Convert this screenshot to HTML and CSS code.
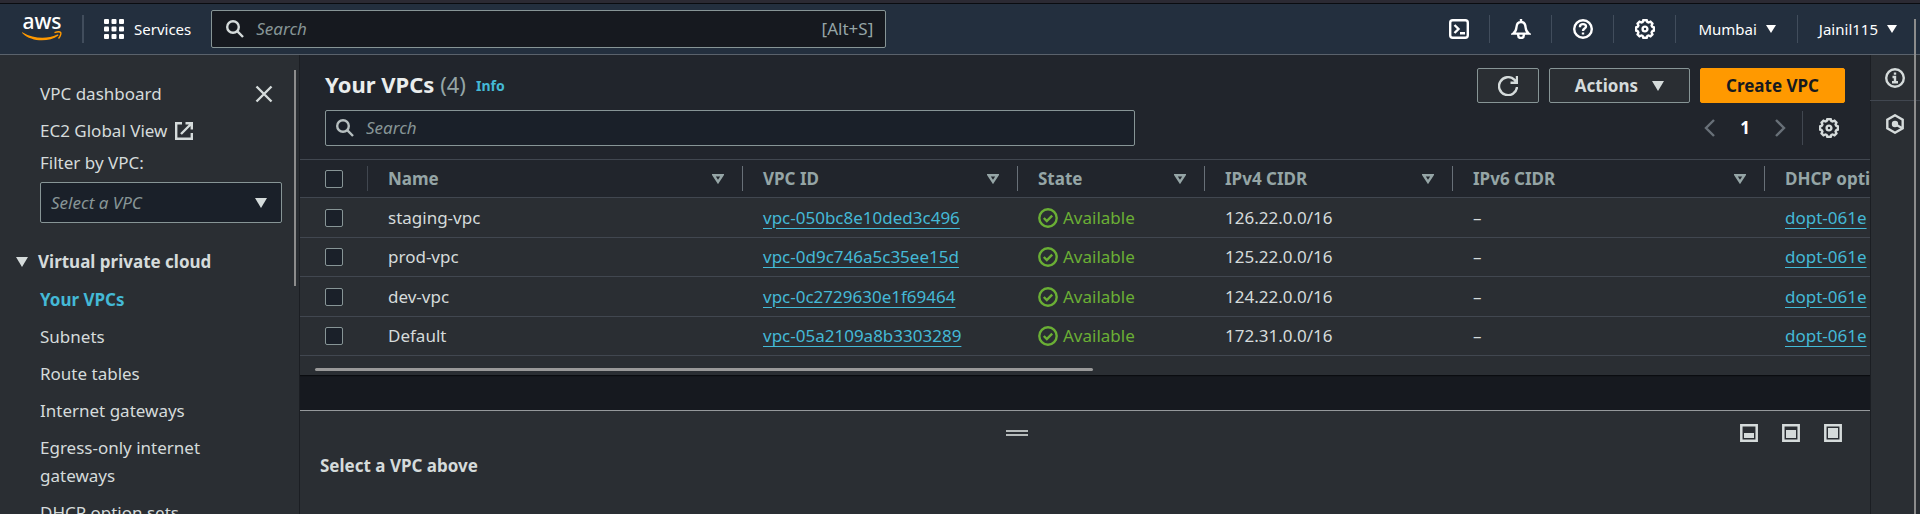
FILE: index.html
```html
<!DOCTYPE html>
<html lang="en">
<head>
<meta charset="utf-8">
<title>Your VPCs | VPC Console</title>
<link rel="stylesheet" href="styles.css">
</head>
<body>
<svg class="sprite" aria-hidden="true">
  <symbol id="search" viewBox="0 0 18 18"><circle cx="7" cy="7" r="5.8"/><path d="M11.2 11.2 17 17"/></symbol>
  <symbol id="gear" viewBox="0 0 20 20"><path d="M8.300 1.200h3.400l.7 1.800 1.200.5 1.900-.8 1.900 1.900-.8 1.900.5 1.200 1.700.7v3.200l-1.700.7-.5 1.200.8 1.900-1.900 1.900-1.900-.8-1.200.5-.7 1.800H8.300l-.7-1.800-1.200-.5-1.900.8-1.900-1.900.8-1.900-.5-1.200-1.700-.7V8.400l1.700-.7.500-1.200-.8-1.900 1.900-1.900 1.900.8L7.600 3z"/><circle cx="10" cy="10" r="2.400"/></symbol>
  <symbol id="sort" viewBox="0 0 12 10"><path d="M1.500 1.200h9L6 8z"/></symbol>
  <symbol id="check" viewBox="0 0 20 20"><circle cx="10" cy="10" r="8.700"/><path d="m5.800 10 3 3 5.400-5.400"/></symbol>
</svg>

<header class="topbar">
  <a class="logo" href="#" aria-label="AWS home"><span>aws</span>
    <svg viewBox="0 0 40 10"><path fill="#ff9900" d="M.8 1.400C12 8 25 8.400 35.300 3.500c1-.4 1.700.5.8 1.200C27 11.200 9.500 11.200.4 2.200c-.6-.6-.2-1.100.4-.8z"/><path fill="none" stroke="#ff9900" stroke-width="1.400" d="M32.500 1.700c3-1.100 5.500-.9 6.200-.2.500.9-.2 3.800-2.200 6"/></svg>
  </a>
  <span class="rule"></span>
  <button class="services"><svg class="i20" viewBox="0 0 20 20" fill="#fff"><g id="d"><rect width="5" height="5" rx="1"/><rect x="7.500" width="5" height="5" rx="1"/><rect x="15" width="5" height="5" rx="1"/></g><use href="#d" y="7.500"/><use href="#d" y="15"/></svg>Services</button>
  <label class="global-search"><svg class="line i18"><use href="#search"/></svg><input type="text" placeholder="Search" aria-label="Search services"><span>[Alt+S]</span></label>
  <nav class="tools">
    <button aria-label="CloudShell"><svg class="line i20" viewBox="0 0 20 20"><rect x="1.200" y="1.200" width="17.600" height="17.600" rx="2.500"/><path d="m5.500 6 4 4-4 4M11 14.200h5"/></svg></button>
    <button aria-label="Notifications"><svg class="line i20" viewBox="0 0 20 20"><path d="M10 0v3M2.200 14.600h15.600C15.500 12.800 14.800 11 14.600 8.500 14.400 5 12.600 3 10 3S5.600 5 5.400 8.500c-.2 2.500-.9 4.300-3.200 6.100zM7.200 15v1.200a2.800 2.800 0 0 0 5.600 0V15"/></svg></button>
    <button aria-label="Help"><svg class="line i20" viewBox="0 0 20 20"><circle cx="10" cy="10" r="8.800"/><path d="M7 8.300V7.500C7 6 8.300 5.100 10 5.100s3 .9 3 2.400c0 2.200-3 2-3 4.500M10 13.500v2"/></svg></button>
    <button aria-label="Settings"><svg class="line i20"><use href="#gear"/></svg></button>
    <button class="region">Mumbai <i class="caret"></i></button>
    <button class="account">Jainil115 <i class="caret"></i></button>
  </nav>
</header>

<div class="layout">
  <aside class="sidebar">
    <div class="side-top"><a href="#">VPC dashboard</a><button aria-label="Close"><svg class="line i18" viewBox="0 0 18 18"><path d="m1.500 1.500 15 15m0-15-15 15"/></svg></button></div>
    <a class="global" href="#">EC2 Global View <svg class="line i18" viewBox="0 0 18 18"><path d="M7 1.200H1.200v15.600h15.600V11M10.500 1.200h6.300v6.300M16.500 1.500 6 12"/></svg></a>
    <label class="filter-label" for="filter">Filter by VPC:</label>
    <div class="select"><select id="filter"><option>Select a VPC</option></select><i class="caret big"></i></div>
    <h2><i class="caret big"></i>Virtual private cloud</h2>
    <ul>
      <li><a class="current" href="#">Your VPCs</a></li>
      <li><a href="#">Subnets</a></li>
      <li><a href="#">Route tables</a></li>
      <li><a href="#">Internet gateways</a></li>
      <li><a href="#">Egress-only internet gateways</a></li>
      <li><a href="#">DHCP option sets</a></li>
    </ul>
    <div class="side-scroll"></div>
  </aside>

  <main>
    <section class="list">
      <div class="list-head">
        <div class="title-row">
          <h1>Your VPCs <span>(4)</span></h1><a class="info" href="#">Info</a>
          <div class="actions">
            <button class="btn refresh" aria-label="Refresh"><svg class="line i20" viewBox="0 0 20 20"><path d="M19 11a9 9 0 1 1-2.700-7.300L18.500 6M19 0v6.800h-6.500"/></svg></button>
            <button class="btn">Actions <i class="caret big"></i></button>
            <button class="btn primary">Create VPC</button>
          </div>
        </div>
        <div class="find-row">
          <label class="find"><svg class="line i18"><use href="#search"/></svg><input type="text" placeholder="Search" aria-label="Search VPCs"></label>
          <div class="pager">
            <button aria-label="Previous page"><svg class="line chev" viewBox="0 0 11 18"><path d="M10 1 2 9l8 8"/></svg></button>
            <b>1</b>
            <button aria-label="Next page"><svg class="line chev" viewBox="0 0 11 18"><path d="m1 1 8 8-8 8"/></svg></button>
            <button class="prefs" aria-label="Preferences"><svg class="line i20"><use href="#gear"/></svg></button>
          </div>
        </div>
      </div>
      <div class="table-wrap">
        <table>
          <colgroup><col class="c-check"><col class="c-name"><col class="c-id"><col class="c-state"><col class="c-v4"><col class="c-v6"><col class="c-dhcp"></colgroup>
          <thead><tr>
            <th><input type="checkbox" aria-label="Select all"></th>
            <th><div class="dim">Name<svg class="line sort"><use href="#sort"/></svg></div></th>
            <th><div>VPC ID<svg class="line sort"><use href="#sort"/></svg></div></th>
            <th><div>State<svg class="line sort"><use href="#sort"/></svg></div></th>
            <th><div>IPv4 CIDR<svg class="line sort"><use href="#sort"/></svg></div></th>
            <th><div>IPv6 CIDR<svg class="line sort"><use href="#sort"/></svg></div></th>
            <th><div>DHCP option set</div></th>
          </tr></thead>
          <tbody>
            <tr><td><input type="checkbox" aria-label="Select staging-vpc"></td><td>staging-vpc</td><td><a href="#">vpc-050bc8e10ded3c496</a></td><td><span class="ok"><svg class="line i20"><use href="#check"/></svg>Available</span></td><td>126.22.0.0/16</td><td>–</td><td><a href="#">dopt-061e</a></td></tr>
            <tr><td><input type="checkbox" aria-label="Select prod-vpc"></td><td>prod-vpc</td><td><a href="#">vpc-0d9c746a5c35ee15d</a></td><td><span class="ok"><svg class="line i20"><use href="#check"/></svg>Available</span></td><td>125.22.0.0/16</td><td>–</td><td><a href="#">dopt-061e</a></td></tr>
            <tr><td><input type="checkbox" aria-label="Select dev-vpc"></td><td>dev-vpc</td><td><a href="#">vpc-0c2729630e1f69464</a></td><td><span class="ok"><svg class="line i20"><use href="#check"/></svg>Available</span></td><td>124.22.0.0/16</td><td>–</td><td><a href="#">dopt-061e</a></td></tr>
            <tr><td><input type="checkbox" aria-label="Select Default"></td><td>Default</td><td><a href="#">vpc-05a2109a8b3303289</a></td><td><span class="ok"><svg class="line i20"><use href="#check"/></svg>Available</span></td><td>172.31.0.0/16</td><td>–</td><td><a href="#">dopt-061e</a></td></tr>
          </tbody>
        </table>
      </div>
      <div class="h-scroll"><div></div></div>
    </section>
    <section class="split">
      <div class="split-bar">
        <span class="grip"></span>
        <div class="sizes">
          <button aria-label="Small panel"><svg class="i18" viewBox="0 0 18 18"><path fill="none" stroke="currentColor" stroke-width="2.500" d="M1.300 1.300h15.400v15.400H1.300z"/><path fill="currentColor" d="M4 9h10v5H4z"/></svg></button>
          <button aria-label="Medium panel"><svg class="i18" viewBox="0 0 18 18"><path fill="none" stroke="currentColor" stroke-width="2.500" d="M1.300 1.300h15.400v15.400H1.300z"/><path fill="currentColor" d="M4 6h10v8H4z"/></svg></button>
          <button aria-label="Full panel"><svg class="i18" viewBox="0 0 18 18"><path fill="none" stroke="currentColor" stroke-width="2.500" d="M1.300 1.300h15.400v15.400H1.300z"/><path fill="currentColor" d="M4 4h10v10H4z"/></svg></button>
        </div>
      </div>
      <h2>Select a VPC above</h2>
    </section>
  </main>

  <aside class="rail">
    <button aria-label="Info"><svg class="line i20" viewBox="0 0 20 20"><circle cx="10" cy="10" r="8.800"/><path d="M10 4.500v2.300M7.500 9H10v5M7 14.300h6"/></svg></button>
    <button aria-label="Tutorials"><svg class="line i20" viewBox="0 0 20 20"><path d="m10 1.300 7.700 4.300v8.800L10 18.700l-7.700-4.300V5.600z"/><circle cx="10" cy="10" r="2" fill="currentColor"/><path d="m10.500 10.500 7 3.800"/></svg></button>
  </aside>
</div>
<div class="page-scroll"></div>
</body>
</html>
```
FILE: styles.css
```css
* { box-sizing: border-box; }
html, body { height: 100%; }
body {
  margin: 0;
  display: flex;
  flex-direction: column;
  position: relative;
  overflow: hidden;
  background: #2a2e33;
  color: #d5dbdb;
  font: 17px/28px "Noto Sans", "Open Sans", sans-serif;
}
button, input, select { font: inherit; color: inherit; background: none; border: 0; padding: 0; margin: 0; }
input, select { outline: 0; }
a { color: inherit; text-decoration: none; }
h1, h2, ul { margin: 0; padding: 0; list-style: none; }
button, svg { flex: none; }
button svg { display: block; }
.sprite { position: absolute; width: 0; height: 0; }
.line { fill: none; stroke: currentColor; stroke-width: 2.400px; }
.i18 { width: 18px; height: 18px; }
.i20 { width: 20px; height: 20px; }
.caret { border: 5px solid transparent; border-top: 8px solid; border-bottom: 0; }
.caret.big { border-width: 10px 6px 0; }

.topbar {
  flex: none;
  display: flex;
  align-items: center;
  height: 55px;
  border-top: 3px solid #2b2a33;
  border-bottom: 1px solid #5a626c;
  padding: 1px 10px 0 22px;
  background: #232f3e;
  box-shadow: inset 0 1px #0a0c10;
  color: #fff;
  font-size: 15px;
}
.logo { width: 40px; display: flex; flex-direction: column; align-items: center; font-size: 21px; line-height: 20px; font-weight: 500; }
.logo span { height: 20px; margin-top: -6px; }
.logo svg { width: 40px; height: 10px; }
.rule { width: 2px; height: 28px; margin: 0 20px; background: #414d5c; }
.services { display: flex; align-items: center; gap: 10px; margin-right: 20px; }
.global-search {
  flex: 0 1 675px;
  display: flex;
  align-items: center;
  gap: 12px;
  height: 38px;
  padding: 0 12px 0 14px;
  border: 1px solid #879596;
  border-radius: 2px;
  background: #16191f;
  color: #d5dbdb;
  font-size: 17px;
}
.global-search input, .find input { flex: 1; min-width: 0; }
.global-search span { color: #95a5a6; }
::placeholder { color: #879596; font-style: italic; opacity: 1; }
.tools { display: flex; margin-left: auto; }
.tools button { display: flex; align-items: center; gap: 9px; height: 28px; padding: 0 20px 0 21px; border-left: 1px solid #414d5c; }
.tools button:first-child { border: 0; }
.tools .region { padding: 0 21px 0 22px; }
.tools .account { padding: 0 13px 0 21px; }

.layout { flex: 1; min-height: 0; display: flex; }
.sidebar { position: relative; flex: none; width: 300px; overflow: hidden; padding: 25px 18px 0 40px; box-shadow: inset -1px 0 #1b1e23; }
.side-top { display: flex; align-items: center; justify-content: space-between; padding-right: 9px; }
.global { display: flex; align-items: center; gap: 8px; margin: 9px 0 4px; }
.filter-label { display: block; }
.select { display: flex; align-items: center; height: 41px; margin-top: 5px; border: 1px solid #879596; border-radius: 2px; background: #1a2029; position: relative; }
.select select { flex: 1; height: 100%; padding: 0 10px; appearance: none; color: #879596; font-style: italic; }
.select option { background: #1a2029; }
.select .caret { position: absolute; right: 14px; pointer-events: none; color: #d5dbdb; }
.sidebar h2 { display: flex; align-items: center; gap: 10px; margin: 25px 0 10px -24px; font-size: 17px; }
.sidebar ul { display: grid; gap: 9px; padding-right: 60px; }
.current { color: #44b9d6; font-weight: 700; }
.side-scroll { position: absolute; right: 4px; top: 15px; width: 2px; height: 216px; background: #8c8c8c; }

main { flex: 1; min-width: 0; display: flex; flex-direction: column; background: #16191f; }
.list { background: #2a2e33; box-shadow: 0 1px 1px #0a0c10; }
.list-head { padding: 13px 25px; background: #21252c; }
.title-row { display: flex; align-items: flex-start; }
.find-row, .actions, .pager { display: flex; align-items: center; }
h1 { font-size: 22px; line-height: 32px; color: #eaeded; }
h1 span { font-weight: 400; color: #95a5a6; }
.info { margin: 4px 0 0 10px; color: #44b9d6; font-size: 14px; font-weight: 700; }
.actions { margin-left: auto; gap: 10px; }
.btn { display: flex; align-items: center; gap: 14px; height: 35px; padding: 0 25px; border: 1px solid #879596; border-radius: 2px; background: #2a2e33; font-weight: 700; }
.refresh { padding: 0 20px; }
.primary { border-color: #ff9900; background: #ff9900; color: #16191f; }
.find-row { justify-content: space-between; margin-top: 7px; }
.find { flex: 0 1 810px; display: flex; align-items: center; gap: 12px; height: 36px; padding: 0 10px; border: 1px solid #879596; border-radius: 2px; background: #1a2029; color: #b6bfc0; }
.pager { color: #687078; }
.pager b { width: 60px; text-align: center; color: #fff; }
.chev { width: 11px; height: 18px; }
.prefs { height: 34px; margin-left: 16px; padding: 0 6px 0 16px; border-left: 1px solid #414750; color: #d5dbdb; }

.table-wrap { overflow: hidden; border-top: 1px solid #414750; }
table { width: 1690px; table-layout: fixed; border-collapse: separate; border-spacing: 0; }
.c-check { width: 67px; }
.c-name { width: 375px; }
.c-id { width: 275px; }
.c-state { width: 187px; }
.c-v4 { width: 248px; }
.c-v6 { width: 312px; }
th, td { height: 39px; padding: 0 0 0 21px; border-bottom: 1px solid #414750; text-align: left; white-space: nowrap; line-height: 24px; }
tbody tr:nth-child(odd) td { height: 40px; }
th { height: 38px; background: #21252c; color: #95a5a6; }
th:first-child, td:first-child { padding-left: 25px; }
th div { display: flex; align-items: center; justify-content: space-between; height: 25px; margin-left: -21px; padding: 0 18px 0 20px; border-left: 1px solid #687078; }
th .dim { border-color: #414750; }
.sort { width: 12px; height: 10px; stroke-width: 2.400px; }
td a { color: #44b9d6; text-decoration: underline; text-underline-offset: 4px; text-decoration-thickness: 1px; }
.ok { display: flex; align-items: center; gap: 5px; color: #6aaf35; }
input[type="checkbox"] { display: block; appearance: none; width: 18px; height: 18px; border: 1px solid #879596; border-radius: 2px; background: #1a2029; }
.h-scroll { padding: 12px 0 4px 15px; }
.h-scroll div { width: 50%; height: 3px; border-radius: 2px; background: #999; }

.split { flex: 1; margin-top: 35px; border-top: 1px solid #95999c; background: #2a2e33; }
.split-bar { display: grid; grid-template-columns: 1fr auto; align-items: center; height: 44px; }
.grip { justify-self: center; width: 22px; height: 6px; border: solid #b6bbbb; border-width: 2px 0; }
.sizes { display: flex; justify-content: flex-end; gap: 24px; padding: 0 28px 0 6px; }
.split h2 { padding: 0 20px; font-size: 17px; line-height: 22px; }

.rail { flex: none; width: 50px; box-shadow: inset 1px 0 #1b1e23; }
.rail button { display: flex; align-items: center; justify-content: center; width: 100%; height: 46px; }
.rail button:first-child { border-bottom: 1px solid #414750; }
.page-scroll { position: absolute; right: 4px; top: 19px; bottom: 0; width: 2px; background: #8c8c8c; }
```
